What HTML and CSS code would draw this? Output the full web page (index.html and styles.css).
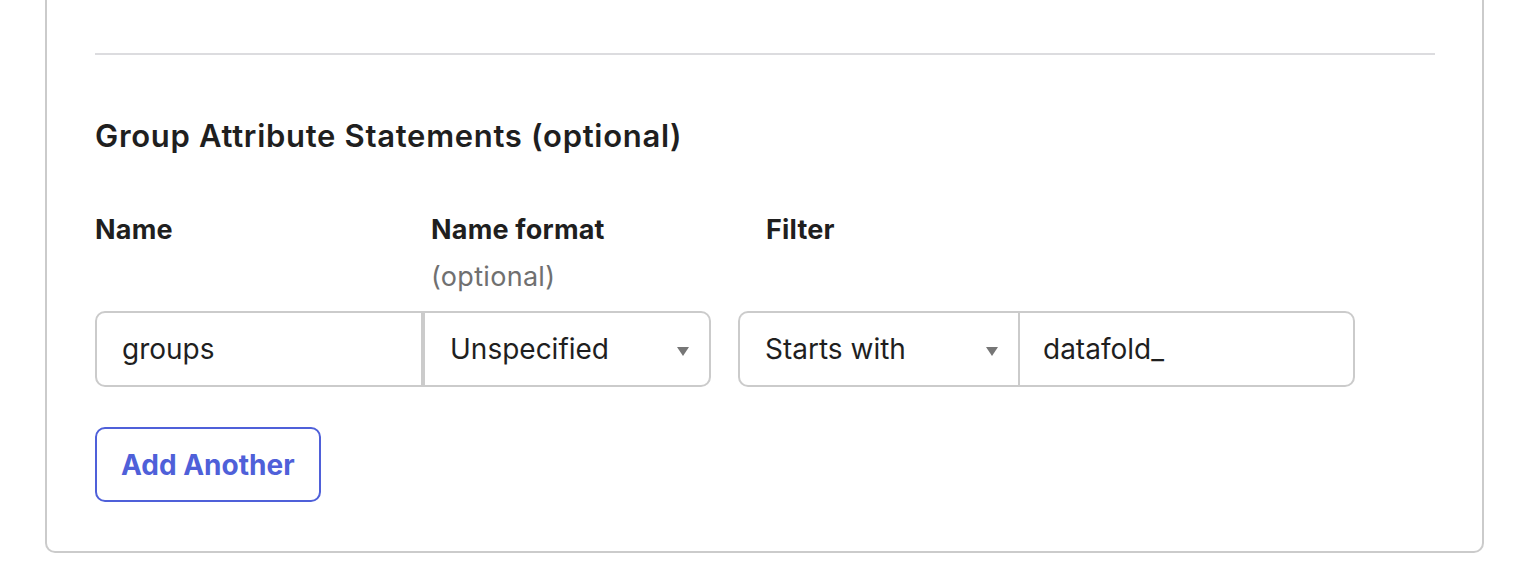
FILE: index.html
```html
<!DOCTYPE html>
<html>
<head>
    <title>Group Attribute Statements</title>
    <link rel="stylesheet" href="styles.css">
</head>
<body>
    <div class="card">
        <hr class="divider">

        <h2 class="section-title">Group Attribute Statements (optional)</h2>

        <div class="fields">
            <div class="label label-name">Name</div>
            <div class="label label-format">Name format<span class="hint">(optional)</span></div>
            <div class="label label-filter">Filter</div>

            <input class="control control-first" type="text" value="groups">
            <div class="control select select-last">
                <span>Unspecified</span>
                <svg class="caret" width="12" height="9" viewBox="0 0 12 9"><path d="M0 0h12L6 9z" fill="#767676"/></svg>
            </div>

            <div class="control select select-first">
                <span>Starts with</span>
                <svg class="caret" width="12" height="9" viewBox="0 0 12 9"><path d="M0 0h12L6 9z" fill="#767676"/></svg>
            </div>
            <input class="control control-last" type="text" value="datafold_">
        </div>

        <button class="add-btn">Add Another</button>
    </div>
</body>
</html>
```

FILE: styles.css
```css
body { margin: 0; font-family: Inter, "Noto Sans", sans-serif; color: #1f1f1f; background: #fff; }

.card {
    margin: 0 52px 0 45px;
    padding: 53px 47px 49px 48px;
    border: 2px solid #cbcbcb; border-top: none;
    border-radius: 0 0 10px 10px;
}
.divider { margin: 0; border: none; height: 2px; background: #dcdcdf; }

.section-title { margin: 63px 0 0; font-size: 31px; line-height: 36px; font-weight: 600; letter-spacing: 0.7px; }

.fields {
    display: grid;
    grid-template-columns: 328px 288px 27px 280px 337px;
    margin-top: 60px;
}
.label { font-size: 27px; line-height: 32px; font-weight: 700; letter-spacing: 0.2px; }
.label-name { grid-column: 1; }
.label-format { grid-column: 2; padding-left: 8px; }
.label-filter { grid-column: 4 / span 2; padding-left: 28px; }
.hint { display: block; margin-top: 15px; font-weight: 400; color: #707070; letter-spacing: 0.3px; }

.control {
    grid-row: 2; height: 76px; margin-top: 18px; box-sizing: border-box;
    border: 2px solid #cbcbcb; background: #fff;
    font-family: inherit; font-size: 28px; color: #1f1f1f;
    padding: 0 20px 0 25px;
}
input.control { outline: none; }
.control-first { grid-column: 1; border-radius: 10px 0 0 10px; }
.select-last { grid-column: 2; border-radius: 0 10px 10px 0; }
.select-first { grid-column: 4; border-right: none; border-radius: 10px 0 0 10px; }
.control-last { grid-column: 5; border-radius: 0 10px 10px 0; padding-left: 23px; }
.select { display: flex; align-items: center; justify-content: space-between; }
.caret { margin-top: 5px; }

.add-btn {
    margin-top: 40px; height: 75px; padding: 0 24px;
    border: 2px solid #4f60d9; border-radius: 10px; background: #fff;
    font-family: inherit; font-size: 28px; font-weight: 700; color: #4f60d9;
}
```
